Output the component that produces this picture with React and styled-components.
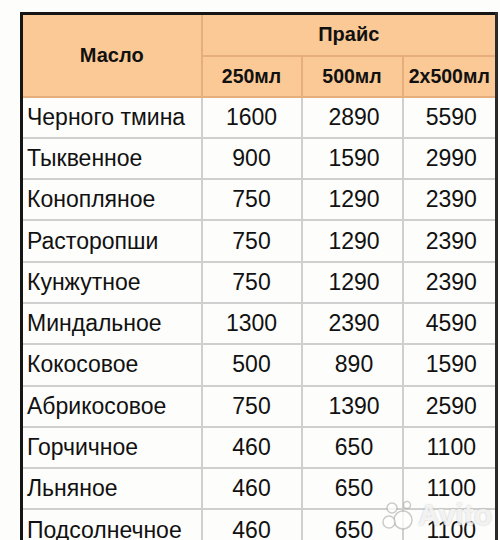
import React from 'react'
import styled, { createGlobalStyle } from 'styled-components'

const GlobalStyle = createGlobalStyle`
  html, body {
    margin: 0;
    padding: 0;
    background: #fdfdfb;
    overflow: hidden;
  }
  body {
    font-family: "Liberation Sans", Arial, sans-serif;
    color: #111;
  }
`

const Page = styled.div`
  position: relative;
  width: 500px;
  height: 540px;
  padding: 12px 0 0 20px;
  box-sizing: border-box;
  overflow: hidden;
`

const Table = styled.table`
  width: 475px;
  border-collapse: collapse;
  table-layout: fixed;
  border-top: 3px solid #151515;
  border-left: 3px solid #151515;
  border-right: 3px solid #2a2a2a;
`

const HeadCell = styled.th`
  background: #fbc995;
  border: 2px solid #e5ae7a;
  font-weight: bold;
  font-size: ${p => (p.$big ? 20 : 19.5)}px;
  text-align: center;
  height: ${p => p.$h}px;
  padding: 0;
  padding-top: ${p => p.$pt || 0}px;
  box-sizing: border-box;
`

const NameCell = styled.td`
  border: 2px solid #cfcfcf;
  font-size: 23px;
  height: 41.3px;
  padding: 0 0 0 4px;
  box-sizing: border-box;
  white-space: nowrap;
`

const PriceCell = styled.td`
  border: 2px solid #cfcfcf;
  font-size: 23px;
  text-align: center;
  padding: 0;
  padding-left: ${p => p.$shift || 0}px;
`

const Watermark = styled.div`
  position: absolute;
  right: 8px;
  bottom: 8px;
  display: flex;
  align-items: center;
  gap: 3px;
  color: rgba(255, 255, 255, 0.8);
  font-size: 30px;
  font-weight: bold;
  text-shadow: 0 0 2px rgba(140, 140, 140, 0.55);
  pointer-events: none;
`

const rows = [
  ['Черного тмина', 1600, 2890, 5590],
  ['Тыквенное', 900, 1590, 2990],
  ['Конопляное', 750, 1290, 2390],
  ['Расторопши', 750, 1290, 2390],
  ['Кунжутное', 750, 1290, 2390],
  ['Миндальное', 1300, 2390, 4590],
  ['Кокосовое', 500, 890, 1590],
  ['Абрикосовое', 750, 1390, 2590],
  ['Горчичное', 460, 650, 1100],
  ['Льняное', 460, 650, 1100],
  ['Подсолнечное', 460, 650, 1100],
]

function AvitoDots() {
  return (
    <svg width="34" height="30" viewBox="0 0 34 30">
      <g fill="rgba(255,255,255,0.75)" stroke="rgba(160,160,160,0.55)" strokeWidth="1.5">
        <circle cx="22" cy="20" r="9" />
        <circle cx="8" cy="22" r="6" />
        <circle cx="11" cy="8" r="5" />
        <circle cx="26" cy="5" r="3.5" />
      </g>
    </svg>
  )
}

export default function App() {
  return (
    <>
      <GlobalStyle />
      <Page>
        <Table>
          <colgroup>
            <col style={{ width: 180 }} />
            <col style={{ width: 100 }} />
            <col style={{ width: 101 }} />
            <col style={{ width: 94 }} />
          </colgroup>
          <thead>
            <tr>
              <HeadCell rowSpan={2} $big>Масло</HeadCell>
              <HeadCell colSpan={3} $h={42} $big>Прайс</HeadCell>
            </tr>
            <tr>
              <HeadCell $h={41}>250мл</HeadCell>
              <HeadCell $h={41}>500мл</HeadCell>
              <HeadCell $h={41}>2х500мл</HeadCell>
            </tr>
          </thead>
          <tbody>
            {rows.map(([name, a, b, c]) => (
              <tr key={name}>
                <NameCell>{name}</NameCell>
                <PriceCell>{a}</PriceCell>
                <PriceCell $shift={4}>{b}</PriceCell>
                <PriceCell $shift={4}>{c}</PriceCell>
              </tr>
            ))}
          </tbody>
        </Table>
        <Watermark>
          <AvitoDots />
          Avito
        </Watermark>
      </Page>
    </>
  )
}
